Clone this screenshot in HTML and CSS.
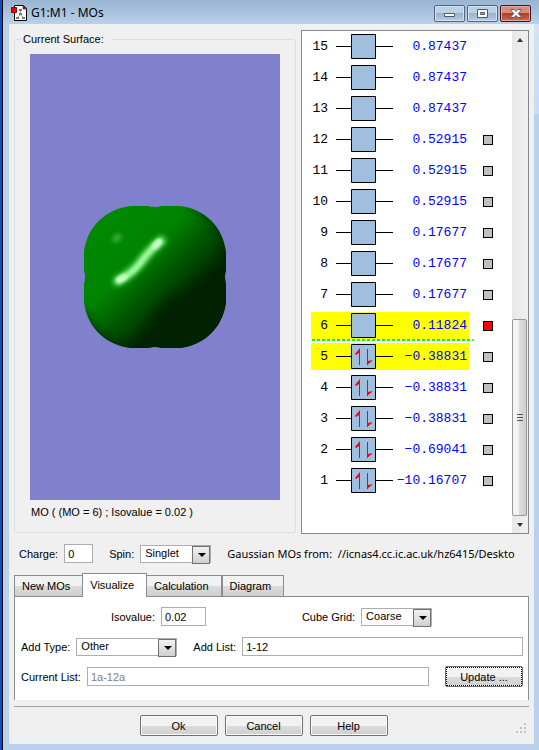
FILE: index.html
```html
<!DOCTYPE html>
<html lang="en">
<head>
  <meta charset="UTF-8">
  <meta name="viewport" content="width=device-width, initial-scale=1.0">
  <title>G1:M1 - MOs</title>
  <link rel="stylesheet" href="styles.css">
</head>
<body>

  <div class="window">
    <header class="titlebar">
      <svg class="app-icon" width="16" height="17" viewBox="0 0 16 17">
        <path d="M3.500 .5h9l3 3v12h-12z" fill="#fff" stroke="#000"/>
        <path d="M12 1v3h3z" fill="#f00" stroke="#000" stroke-width=".5"/>
        <path d="M9.500 5v4M9.500 9l-3 4M9.500 9l3 4" fill="none" stroke="#999"/>
        <path d="M8 4h3v2H8zM8 8h3v2H8zM5 12h3v2H5zM11 12h3v2h-3z" fill="#777"/>
        <path d="M.5 2.500h5v5h-5z" fill="#f00" stroke="#800"/>
      </svg>
      <h1 class="title">G1:M1 - MOs</h1>
      <div class="window-buttons">
        <button class="win-btn" aria-label="Minimize">
          <svg width="12" height="11" viewBox="0 0 12 11"><path d="M.5 5.500h10v3H.5z" fill="#fff" stroke="#535666"/></svg>
        </button>
        <button class="win-btn" aria-label="Maximize">
          <svg width="12" height="11" viewBox="0 0 12 11"><path d="M.5 1.500h10v8H.5zM3.500 4.500v2h4v-2z" fill="#fff" fill-rule="evenodd" stroke="#535666"/></svg>
        </button>
        <button class="win-btn close" aria-label="Close">
          <svg width="12" height="11" viewBox="0 0 12 11"><path d="M1 1.500h3l2 2 2-2h3v1L8.200 5.500 11 8.500v1H8l-2-2-2 2H1v-1l2.800-3L1 2.500z" fill="#fff" stroke="#535666"/></svg>
        </button>
      </div>
    </header>

    <main class="content">
      <div class="top">
        <fieldset class="surface-box">
          <legend>Current Surface:</legend>
          <div class="surface">
            <svg width="142" height="142" viewBox="0 0 142 142">
              <defs>
                <linearGradient id="shade" gradientUnits="userSpaceOnUse" x1="20" y1="20" x2="100" y2="100">
                  <stop offset="0" stop-color="#008800"/>
                  <stop offset=".42" stop-color="#008400"/>
                  <stop offset=".62" stop-color="#006400"/>
                  <stop offset=".82" stop-color="#004200"/>
                  <stop offset="1" stop-color="#002200"/>
                </linearGradient>
                <filter id="soft" x="-50%" y="-50%" width="200%" height="200%"><feGaussianBlur stdDeviation="2.500"/></filter>
                <filter id="core" x="-50%" y="-50%" width="200%" height="200%"><feGaussianBlur stdDeviation="1.500"/></filter>
                <filter id="softer" x="-50%" y="-50%" width="200%" height="200%"><feGaussianBlur stdDeviation="6"/></filter>
                <clipPath id="blob">
                  <path d="M47 0H64Q71 2 78 0H96C121 3 139 21 142 46V64Q140 71 142 78V96C139 121 121 139 96 142H78Q71 140 64 142H47C21 139 3 121 0 96V78Q2 71 0 64V46C3 21 21 3 47 0Z"/>
                </clipPath>
              </defs>
              <g clip-path="url(#blob)">
                <path d="M0 0h142v142H0z" fill="url(#shade)"/>
                <path d="M152 46Q128 72 100 86T70 112 38 148H152z" fill="#002000" filter="url(#softer)"/>
                <path d="M108-6Q138 6 150 50M-6 104Q4 136 50 150" fill="none" stroke="#002800" stroke-width="10" filter="url(#softer)"/>
                <ellipse cx="33" cy="32" rx="5" ry="3" transform="rotate(-45 33 32)" fill="#50b850" filter="url(#soft)"/>
                <path d="M34 75Q50 66 57 56T77 35" fill="none" stroke="#60e060" stroke-width="10" stroke-linecap="round" filter="url(#soft)"/>
                <path d="M36 74Q50 66 57 56T75 36" fill="none" stroke="#a0f8a0" stroke-width="5" stroke-linecap="round" filter="url(#core)"/>
                <path d="M35 74l5-3M71 40l4-4" fill="none" stroke="#d0ffd0" stroke-width="6" stroke-linecap="round" filter="url(#core)"/>
              </g>
            </svg>
          </div>
          <p class="caption">MO ( (MO = 6) ; Isovalue = 0.02 )</p>
        </fieldset>

        <div class="orbitals">
          <ul class="orbital-list" id="orbitals"></ul>
          <div class="scrollbar">
            <span class="arrow up"></span>
            <div class="track"><div class="thumb"><i></i><i></i><i></i></div></div>
            <span class="arrow down"></span>
          </div>
        </div>
      </div>

      <div class="row info">
        <label class="charge-label" for="charge">Charge:</label>
        <input class="field charge" id="charge" type="text" value="0">
        <label class="spin-label" for="spin">Spin:</label>
        <span class="combo small">
          <select id="spin"><option>Singlet</option></select>
        </span>
        <span class="source">Gaussian MOs from:&nbsp; //icnas4.cc.ic.ac.uk/hz6415/Deskto</span>
      </div>

      <div class="tabs" role="tablist">
        <button class="tab" role="tab">New MOs</button>
        <button class="tab active" role="tab" aria-selected="true">Visualize</button>
        <button class="tab" role="tab">Calculation</button>
        <button class="tab" role="tab">Diagram</button>
      </div>

      <section class="pane">
        <div class="row spread">
          <div class="pair">
            <label for="isovalue">Isovalue:</label>
            <input class="field iso" id="isovalue" type="text" value="0.02">
          </div>
          <div class="pair">
            <label for="grid">Cube Grid:</label>
            <span class="combo small">
              <select id="grid"><option>Coarse</option></select>
            </span>
          </div>
        </div>
        <div class="row">
          <label class="type-label" for="type">Add Type:</label>
          <span class="combo wide">
            <select id="type"><option>Other</option></select>
          </span>
          <label class="list-label" for="list">Add List:</label>
          <input class="field grow" id="list" type="text" value="1-12">
        </div>
        <div class="row">
          <label class="current-label" for="current">Current List:</label>
          <input class="field grow" id="current" type="text" value="1a-12a" disabled>
          <button class="btn focused">Update ...</button>
        </div>
      </section>

      <footer class="footer">
        <div class="actions">
          <button class="btn">Ok</button>
          <button class="btn">Cancel</button>
          <button class="btn">Help</button>
        </div>
        <svg class="grip" width="16" height="16" viewBox="0 0 16 16">
          <path d="M11 3h2v2h-2zM7 7h2v2H7zM11 7h2v2h-2zM3 11h2v2H3zM7 11h2v2H7zM11 11h2v2h-2z" fill="#c4c4c4"/>
        </svg>
      </footer>
    </main>
  </div>

  <script src="script.js"></script>
</body>
</html>
```

FILE: styles.css
```css
* {
  margin: 0;
  padding: 0;
  box-sizing: border-box;
}

body {
  min-height: 100vh;
  display: flex;
  background: linear-gradient(90deg, #0c4fc0 2px, #000 2px);
  padding-left: 3px;
  font-family: "Liberation Sans", sans-serif;
  font-size: 11px;
  line-height: 14px;
  color: #000;
}

button,
input,
select {
  font: inherit;
  color: inherit;
}

.window {
  flex: 1;
  min-width: 0;
  display: flex;
  flex-direction: column;
  background: linear-gradient(#d3e3f5, #c8dcf2) right 24px / 5px 90px no-repeat, #b9d1ea;
  padding: 0 5px 6px 6px;
}

/* title bar */
.titlebar {
  display: flex;
  align-items: center;
  height: 24px;
  margin: 0 -5px 0 -6px;
  padding: 2px 8px 0 8px;
  background: linear-gradient(#98b4d1, #b9d1ea);
}

.title {
  flex: 1;
  margin-left: 4px;
  font-family: "Noto Sans", sans-serif;
  font-size: 12px;
  font-weight: normal;
}

.window-buttons {
  display: flex;
  gap: 2px;
}

.win-btn {
  display: flex;
  align-items: center;
  justify-content: center;
  width: 31px;
  height: 17px;
  border: 1px solid #53657c;
  border-radius: 2px;
  box-shadow: inset 0 0 0 1px #d5e2f0;
  background: linear-gradient(#bcd0e6 50%, #9ab4cf 50%, #b5cbe3);
}

.win-btn.close {
  border-color: #431422;
  box-shadow: inset 0 0 0 1px #e0a99f;
  background: linear-gradient(#d98d80 50%, #b8392a 50%, #cf6b50);
}

.content {
  flex: 1;
  display: flex;
  flex-direction: column;
  background: #f0f0f0;
  padding: 6px 5px 7px;
}

.top {
  display: flex;
  gap: 5px;
}

/* surface preview */
.surface-box {
  flex: 1;
  min-width: 0;
  margin: 2px 0 1px;
  border: 1px solid #d5dfe5;
  border-radius: 3px;
  padding: 8px 15px 13px;
}

.surface-box legend {
  margin-left: -8px;
  padding: 0 8px 0 1px;
}

.surface {
  display: flex;
  align-items: center;
  justify-content: center;
  height: 446px;
  background: #8080cc;
}

.caption {
  margin-top: 5px;
  padding-left: 1px;
}

/* orbital list */
.orbitals {
  display: flex;
  width: 228px;
  border: 1px solid #828790;
  background: #fff;
}

.orbital-list {
  flex: 1;
  list-style: none;
  padding-left: 9px;
}

.orbital {
  display: flex;
  align-items: center;
  height: 31px;
}

.level {
  display: flex;
  align-items: center;
  justify-content: flex-end;
  width: 158px;
  height: 27px;
  padding-right: 2px;
  font-family: "Liberation Mono", monospace;
  font-size: 13px;
}

.level.selected {
  background: #ff0;
}

.number {
  width: 17px;
  text-align: right;
}

.box {
  margin-left: 8px;
}

.energy {
  flex: 1;
  margin-left: -8px;
  text-align: right;
  color: #00f;
}

.homo {
  position: relative;
}

.homo::before {
  content: "";
  position: absolute;
  top: -2px;
  left: 1px;
  width: 161px;
  height: 2px;
  background: repeating-linear-gradient(90deg, #0f0 0 3px, #fff 3px 5px);
}

.mark {
  appearance: none;
  width: 10px;
  height: 10px;
  margin-left: 14px;
  border: 1px solid #000;
  background: #c0c0c0;
}

.mark:checked {
  background: #f00;
}

.scrollbar {
  display: flex;
  flex-direction: column;
  width: 16px;
  background: linear-gradient(90deg, #e8e8e8, #f0f0f0);
}

.arrow {
  height: 17px;
  display: flex;
  align-items: center;
  justify-content: center;
}

.arrow::before {
  content: "";
  border: 3px solid transparent;
}

.arrow.up::before {
  border-top: 0;
  border-bottom: 4px solid #333;
}

.arrow.down::before {
  border-bottom: 0;
  border-top: 4px solid #333;
}

.track {
  flex: 1;
  display: flex;
  flex-direction: column;
  justify-content: flex-end;
}

.thumb {
  height: 42%;
  margin: 0 1px 0 0;
  display: flex;
  flex-direction: column;
  align-items: center;
  justify-content: center;
  gap: 2px;
  border: 1px solid #979797;
  border-radius: 2px;
  background: linear-gradient(90deg, #f4f4f4 40%, #dcdcdc 50%, #cfcfcf);
}

.thumb i {
  width: 6px;
  height: 1px;
  background: #555;
}

/* form rows */
.row {
  display: flex;
  align-items: center;
  height: 19px;
}

.info {
  margin: 10px 0;
  padding: 0 7px 0 5px;
}

.field {
  min-width: 0;
  height: 19px;
  padding: 0 3px;
  border: 1px solid #abadb3;
  background: #fff;
}

.field:disabled {
  color: #808080;
}

.charge {
  width: 29px;
}

.charge-label,
.spin-label,
.type-label,
.current-label,
.list-label {
  margin-right: 6px;
}

.spin-label,
.list-label {
  margin-left: 16px;
}

.combo {
  position: relative;
  display: flex;
  height: 18px;
}

.combo select {
  appearance: none;
  width: 100%;
  padding: 0 20px 1px 4px;
  border: 1px solid #abadb3;
  border-radius: 0;
  background: #fff;
}

.combo.small {
  width: 71px;
}

.combo.wide {
  width: 101px;
}

/* drop-down arrow */
.combo::before {
  content: "";
  position: absolute;
  top: 1px;
  right: 1px;
  width: 16px;
  height: 16px;
  border: 1px solid #707070;
  background: linear-gradient(#f2f2f2, #cfcfcf);
  pointer-events: none;
}

.combo::after {
  content: "";
  position: absolute;
  top: 8px;
  right: 5px;
  border: 4px solid transparent;
  border-top-color: #000;
  border-bottom: 0;
  pointer-events: none;
}

.source {
  flex: 1;
  min-width: 0;
  margin-left: 16px;
  overflow: hidden;
  white-space: nowrap;
  font-family: "Noto Sans", sans-serif;
}

/* tabs */
.tabs {
  display: flex;
  align-items: flex-end;
  height: 23px;
}

.tab {
  height: 21px;
  padding: 0 12px 0 7px;
  border: 1px solid #898c95;
  border-bottom: 0;
  background: linear-gradient(#f2f2f2 50%, #dcdcdc 50%, #cfcfcf);
}

.tab.active {
  height: 24px;
  margin: 0 -1px -1px;
  padding-bottom: 2px;
  background: #fff;
  z-index: 1;
}

.pane {
  display: flex;
  flex-direction: column;
  gap: 11px;
  padding: 10px 0 14px;
  border: 1px solid #898c95;
  border-bottom: 0;
  background: #fff;
}

.pane .row {
  padding: 0 5px 0 6px;
}

.pane .spread {
  justify-content: space-evenly;
  padding: 0;
}

.pair {
  display: flex;
  align-items: center;
  gap: 6px;
}

.iso {
  width: 45px;
}

.grow {
  flex: 1;
}

.btn {
  width: 78px;
  height: 21px;
  border: 1px solid #707070;
  border-radius: 2px;
  box-shadow: inset 0 0 0 1px #fbfbfb;
  background: linear-gradient(#f2f2f2 50%, #dddddd 50%, #cfcfcf);
}

.btn.focused {
  margin-left: 16px;
  outline: 1px dotted #000;
  outline-offset: -2px;
}

/* bottom buttons */
.footer {
  display: flex;
  align-items: center;
  margin-top: 6px;
  padding-top: 8px;
  border-top: 1px solid #a0a0a0;
}

.actions {
  flex: 1;
  display: flex;
  justify-content: center;
  gap: 7px;
}

.grip {
  align-self: flex-end;
}
```

FILE: script.js
```js
const energies = [
  '−10.16707', '−0.69041', '−0.38831', '−0.38831', '−0.38831',
  '0.11824', '0.17677', '0.17677', '0.17677', '0.52915',
  '0.52915', '0.52915', '0.87437', '0.87437', '0.87437'
];
const occupied = 5;
const selected = [5, 6];
const shown = 6;
const marked = 12;

const electrons = '<path d="M23.500 21V5M31.500 5v16" stroke="#f00"/>' +
  '<path d="M24 4v5h-1l-3 2-1-1zM31 21v-5l2 1 3-1v1z" fill="#f00"/>';

const list = document.getElementById('orbitals');

for (let n = energies.length; n >= 1; n--) {
  const item = document.createElement('li');
  item.className = n === occupied ? 'orbital homo' : 'orbital';
  item.innerHTML = `
    <div class="level${selected.includes(n) ? ' selected' : ''}">
      <span class="number">${n}</span>
      <svg class="box" width="57" height="25" viewBox="0 0 57 25">
        <path d="M0 12.500h57" stroke="#000"/>
        <path d="M15.500 .5h24v24h-24z" fill="#a0bfdf" stroke="#000"/>
        ${n <= occupied ? electrons : ''}
      </svg>
      <span class="energy">${energies[n - 1]}</span>
    </div>
    ${n <= marked ? `<input class="mark" type="checkbox" aria-label="MO ${n}"${n === shown ? ' checked' : ''}>` : ''}`;
  list.appendChild(item);
}
```
